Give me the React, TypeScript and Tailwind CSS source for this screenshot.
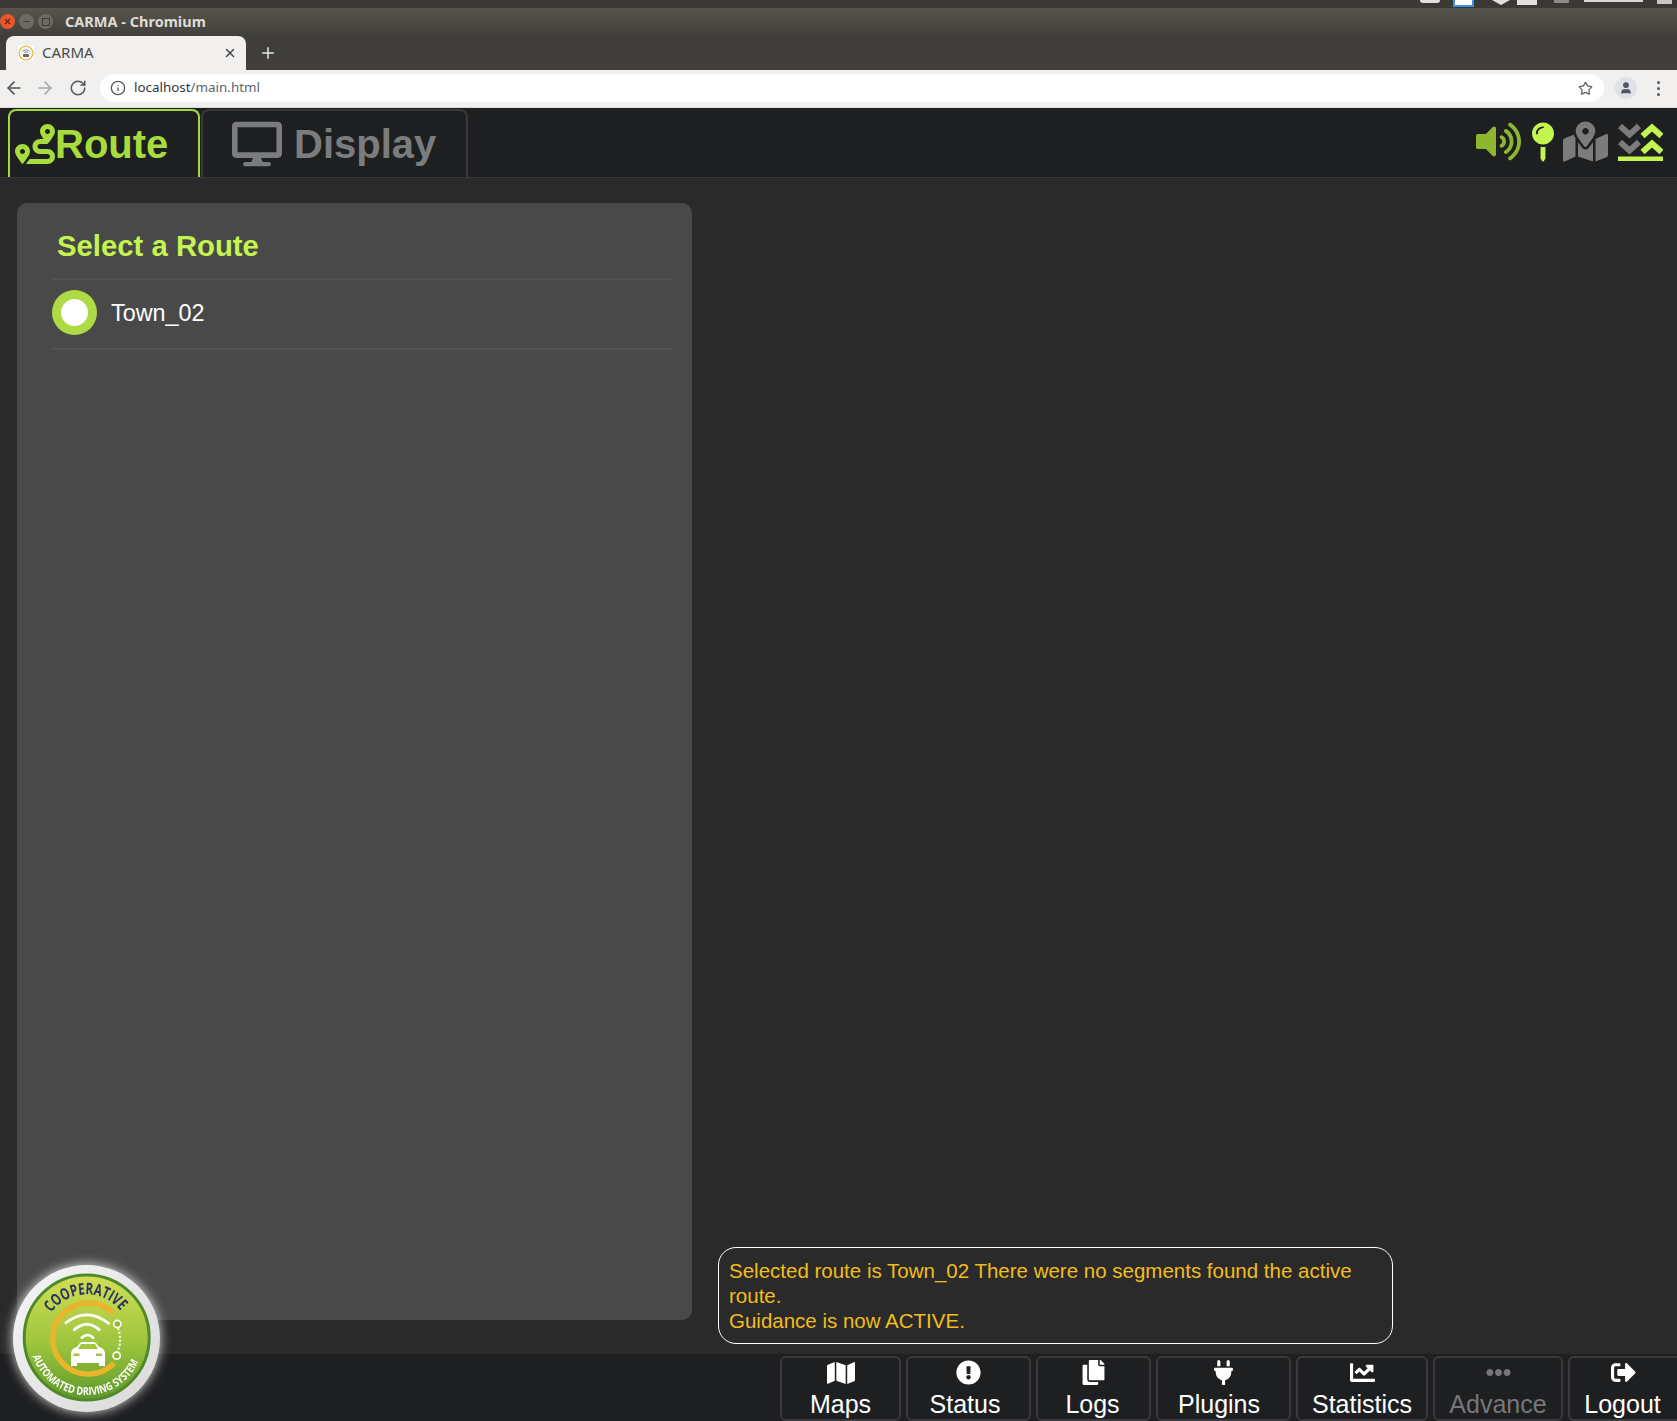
import { ArrowLeft, ArrowRight, RotateCw, Info, Star, X, Plus, Minus, User } from 'lucide-react'
import {
  FaRoute,
  FaDesktop,
  FaVolumeUp,
  FaMapPin,
  FaMapMarkedAlt,
  FaMap,
  FaExclamationCircle,
  FaCopy,
  FaPlug,
  FaChartLine,
  FaEllipsisH,
  FaSignOutAlt,
} from 'react-icons/fa'

function CarPath() {
  return (
    <>
      <path
        d="M58 101 V88 q0 -3 3 -5 l3 -1 l3 -4 q1 -1 3 -1 h10 q2 0 3 1 l3 4 l3 1 q3 2 3 5 V101 h-6 v-3 H64 v3 Z"
        fill="#fff"
      />
      <path d="M65 84 l3 -5 h14 l3 5 Z" fill="#a3c63f" />
      <rect x="60.5" y="88.5" width="6" height="2.5" fill="#a3c63f" />
      <rect x="83" y="88.5" width="6" height="2.5" fill="#a3c63f" />
    </>
  )
}

function CarmaLogo() {
  return (
    <svg
      viewBox="0 0 147 147"
      className="absolute left-[13px] top-[1265px] h-[147px] w-[147px] overflow-visible drop-shadow-[0_0_6px_rgba(255,255,255,0.85)]"
    >
      <defs>
        <linearGradient id="disc" x1="0" y1="0" x2="0" y2="1">
          <stop offset="0" stopColor="#d3df55" />
          <stop offset="0.55" stopColor="#9cc53d" />
          <stop offset="1" stopColor="#5f982c" />
        </linearGradient>
        <linearGradient id="rim" x1="0" y1="0" x2="1" y2="1">
          <stop offset="0" stopColor="#f6f6f6" />
          <stop offset="1" stopColor="#d8d8d8" />
        </linearGradient>
        <path id="topArc" d="M38.5 47.6 A43 43 0 0 1 107.6 45.8" />
        <path id="bottomArc" d="M19.7 91.3 A57 57 0 0 0 127.7 91.3" />
      </defs>
      <circle cx="73.5" cy="73.5" r="73.5" fill="url(#rim)" />
      <circle cx="73.7" cy="72.5" r="62.5" fill="url(#disc)" stroke="#4f8a2a" strokeWidth="3" />
      <path d="M100.3 48.5 A35.5 35.5 0 1 0 101 98" fill="none" stroke="#e8b52c" strokeWidth="5.5" />
      <path d="M105 63 Q109.5 75 104.5 87" fill="none" stroke="#fff" strokeWidth="2" strokeDasharray="2 2" />
      <circle cx="104.3" cy="59" r="3.6" fill="#8fbb38" stroke="#fff" strokeWidth="1.6" />
      <circle cx="103.7" cy="90.7" r="3.6" fill="#8fbb38" stroke="#fff" strokeWidth="1.6" />
      <path d="M52 58.5 Q74 41 96.5 59" fill="none" stroke="#fff" strokeWidth="2.8" />
      <path d="M60.5 65.5 Q74 53 87 65.5" fill="none" stroke="#fff" strokeWidth="2.8" />
      <path d="M68 73.5 Q74.5 66.5 81 73.5" fill="none" stroke="#fff" strokeWidth="2.6" />
      <CarPath />
      <text className="fill-[#2c3163] font-['Open_Sans',sans-serif] text-[16px] font-bold">
        <textPath href="#topArc" textLength="80" lengthAdjust="spacingAndGlyphs">
          COOPERATIVE
        </textPath>
      </text>
      <text className="fill-white font-['Open_Sans',sans-serif] text-[11px] font-bold">
        <textPath href="#bottomArc" textLength="136" lengthAdjust="spacingAndGlyphs">
          AUTOMATED DRIVING SYSTEM
        </textPath>
      </text>
    </svg>
  )
}

function DoubleChevrons() {
  return (
    <svg viewBox="0 0 45 38" className="h-[38px] w-[45px]">
      <g fill="none" strokeWidth="6" strokeMiterlimit="10">
        <polyline points="2,3 11.5,11.5 21,3" stroke="#7b7b7b" />
        <polyline points="2,19 11.5,27.5 21,19" stroke="#7b7b7b" />
        <polyline points="24.5,13 34,4.5 43.5,13" stroke="#c3f44f" />
        <polyline points="24.5,29 34,20.5 43.5,29" stroke="#c3f44f" />
      </g>
      <rect x="0" y="33.5" width="45" height="4.5" fill="#c3f44f" />
    </svg>
  )
}

function Favicon() {
  return (
    <svg viewBox="0 0 16 16" className="h-4 w-4 bg-white">
      <circle cx="8" cy="8" r="7" fill="#f3f3f3" stroke="#e8b52c" strokeWidth="1.2" />
      <path d="M4.5 6 Q8 3.5 11.5 6 M6 7.5 Q8 6 10 7.5" fill="none" stroke="#777" strokeWidth="0.8" />
      <rect x="5" y="9" width="6" height="3" rx="1" fill="#666" />
    </svg>
  )
}

function Chrome() {
  return (
    <div className="flex flex-col font-['Noto_Sans',sans-serif]">
      <div className="flex h-2 items-start justify-end bg-[#3a3935] pr-[5px]">
        <div className="h-[3px] w-[20px] rounded-b bg-[#e4e2dd]" />
        <div className="ml-[13px] h-[7px] w-[21px] border-x-2 border-b-2 border-[#3b8ee8] bg-white" />
        <div className="ml-[18px] h-[5px] w-[18px] bg-[#e4e2dd] [clip-path:polygon(0_0,100%_0,50%_100%)]" />
        <div className="ml-[7px] h-[5px] w-[20px] bg-[#e4e2dd]" />
        <div className="ml-[17px] h-[3px] w-[15px] bg-[#8d8b86]" />
        <div className="ml-[15px] h-[2px] w-[59px] bg-[#d9d7d2]" />
        <div className="ml-[14px] h-[4px] w-[15px] bg-[#c9c7c2]" />
      </div>
      <div className="flex h-[27px] items-center bg-gradient-to-b from-[#58554c] to-[#41403b]">
        <div className="flex w-[65px] items-center gap-1">
          <div className="flex h-[15px] w-[15px] items-center justify-center rounded-full bg-[#e9572b] text-[#5e2410]">
            <X size={9} strokeWidth={3} />
          </div>
          <div className="flex h-[15px] w-[15px] items-center justify-center rounded-full bg-[#6c6a64] text-[#3d3c37]">
            <Minus size={9} strokeWidth={3} />
          </div>
          <div className="flex h-[15px] w-[15px] items-center justify-center rounded-full bg-[#6c6a64]">
            <div className="h-[8px] w-[8px] border border-[#3d3c37]" />
          </div>
        </div>
        <span className="mt-[1px] text-[14.5px] font-bold text-[#dedcd6]">CARMA - Chromium</span>
      </div>
      <div className="flex h-[35px] items-end bg-[#3f3e3a]">
        <div className="ml-[6px] flex h-[34px] w-[240px] items-center rounded-t-[8px] bg-[#f1f0ee] pl-[12px] pr-[9px]">
          <Favicon />
          <span className="mb-[1px] ml-[8px] flex-1 text-[15px] text-[#4a4a48]">CARMA</span>
          <X size={14} strokeWidth={2.5} className="text-[#45474a]" />
        </div>
        <Plus size={18} strokeWidth={2} className="mb-[8px] ml-[13px] text-[#e8e7e4]" />
      </div>
      <div className="flex h-[38px] items-center border-b border-[#dcdad7] bg-[#f1f0ee] pb-[1px]">
        <div className="flex w-[100px] items-center gap-[11px] pl-[4px] text-[#555]">
          <ArrowLeft size={20} />
          <ArrowRight size={20} className="text-[#a9a9a9]" />
          <RotateCw size={18} className="ml-[3px]" />
        </div>
        <div className="flex h-[28px] w-[1504px] items-center rounded-full bg-white pl-[10px] pr-[11px]">
          <Info size={16} className="text-[#5a5a5a]" />
          <span className="mb-[1px] ml-[8px] flex-1 text-[13.4px] text-[#5f6368]">
            <span className="text-[#35363a]">localhost</span>/main.html
          </span>
          <Star size={15} strokeWidth={2} className="text-[#5f6368]" />
        </div>
        <div className="ml-[11px] flex h-[22px] w-[22px] items-center justify-center rounded-full bg-[#e0e1e6] text-[#4f5466]">
          <User size={14} fill="currentColor" />
        </div>
        <div className="ml-[20px] flex flex-col gap-[3px]">
          <div className="h-[3px] w-[3px] rounded-full bg-[#555]" />
          <div className="h-[3px] w-[3px] rounded-full bg-[#555]" />
          <div className="h-[3px] w-[3px] rounded-full bg-[#555]" />
        </div>
      </div>
    </div>
  )
}

function Header() {
  return (
    <div className="flex h-[70px] items-end justify-between border-b border-[#38383a] bg-[#1e1f21]">
      <div className="ml-[8px] flex h-[68px] gap-[1px] font-bold">
        <div className="flex h-full w-[192px] items-center rounded-t-[8px] border-x-2 border-t-2 border-[#a6d93f] pl-[5px] text-[#a6dc3c]">
          <FaRoute size={40} />
          <span className="text-[40px] leading-none">Route</span>
        </div>
        <div className="flex h-full w-[267px] items-center rounded-t-[8px] border-x-2 border-t-2 border-[#38383a] pl-[29px] text-[#7b7c7e]">
          <FaDesktop size={50} />
          <span className="ml-[12px] text-[40px] leading-none">Display</span>
        </div>
      </div>
      <div className="mb-[13px] flex items-center pr-[14px]">
        <FaVolumeUp size={45} className="text-[#8db72f]" />
        <FaMapPin size={40} className="ml-[11px] w-[22px] text-[#c3f44f]" />
        <FaMapMarkedAlt size={45} className="ml-[9px] text-[#7b7b7b]" />
        <div className="ml-[10px]">
          <DoubleChevrons />
        </div>
      </div>
    </div>
  )
}

function Main() {
  return (
    <div className="flex h-[1176px] bg-[#2b2a2b] pl-[17px] pt-[25px]">
      <div className="h-[1117px] w-[675px] rounded-[10px] bg-[#4a494a] pl-[35px] pr-[20px]">
        <h2 className="ml-[5px] flex h-[75px] items-center pt-[11px] text-[29.3px] font-bold text-[#c3f44f]">
          Select a Route
        </h2>
        <div className="flex h-[72px] items-center border-y-2 border-[#525152] pb-[4px]">
          <div className="flex h-[45px] w-[45px] items-center justify-center rounded-full bg-[#aedb45]">
            <div className="h-[27px] w-[27px] rounded-full bg-white" />
          </div>
          <span className="ml-[14px] mt-[4px] text-[23.4px] text-white">Town_02</span>
        </div>
      </div>
      <div className="ml-[26px] mt-[1044px] h-[97px] w-[675px] rounded-[18px] border border-white px-[10px] py-[10px] text-[20.5px] leading-[25px] text-[#f2bd1c]">
        Selected route is Town_02 There were no segments found the active route.
        <br />
        Guidance is now ACTIVE.
      </div>
    </div>
  )
}

const footerItems = [
  { label: 'Maps', icon: <FaMap size={28} />, width: 'w-[121px]', text: '' },
  { label: 'Status', icon: <FaExclamationCircle size={25} />, width: 'w-[125px]', text: 'mr-[7px]' },
  { label: 'Logs', icon: <FaCopy size={25} />, width: 'w-[115px]', text: 'mr-[2px]' },
  { label: 'Plugins', icon: <FaPlug size={25} />, width: 'w-[135px]', text: 'mr-[9px]' },
  { label: 'Statistics', icon: <FaChartLine size={25} />, width: 'w-[132px]', text: '' },
  { label: 'Advance', icon: <FaEllipsisH size={25} />, width: 'w-[130px]', text: '', muted: true },
  { label: 'Logout', icon: <FaSignOutAlt size={25} />, width: 'w-[109px]', text: 'mr-[2px]', last: true },
]

function Footer() {
  return (
    <div className="flex h-[67px] justify-end gap-[5px] overflow-hidden bg-[#1e1f21] pt-[2px]">
      {footerItems.map((item) => (
        <div
          key={item.label}
          className={`flex flex-col items-center rounded-[6px] border-2 border-[#3a3a3c] pt-[2px] ${item.width} ${
            item.muted ? 'text-[#77777a]' : 'text-white'
          } ${item.last ? 'rounded-r-none border-r-0' : ''}`}
        >
          <div className="flex h-[25px] items-center">{item.icon}</div>
          <span className={`mt-[4px] text-[25px] leading-[30px] ${item.text}`}>{item.label}</span>
        </div>
      ))}
    </div>
  )
}

export default function App() {
  return (
    <div className="relative h-[1421px] w-[1677px] overflow-hidden font-['Liberation_Sans',Arial,sans-serif]">
      <Chrome />
      <Header />
      <Main />
      <Footer />
      <CarmaLogo />
    </div>
  )
}
